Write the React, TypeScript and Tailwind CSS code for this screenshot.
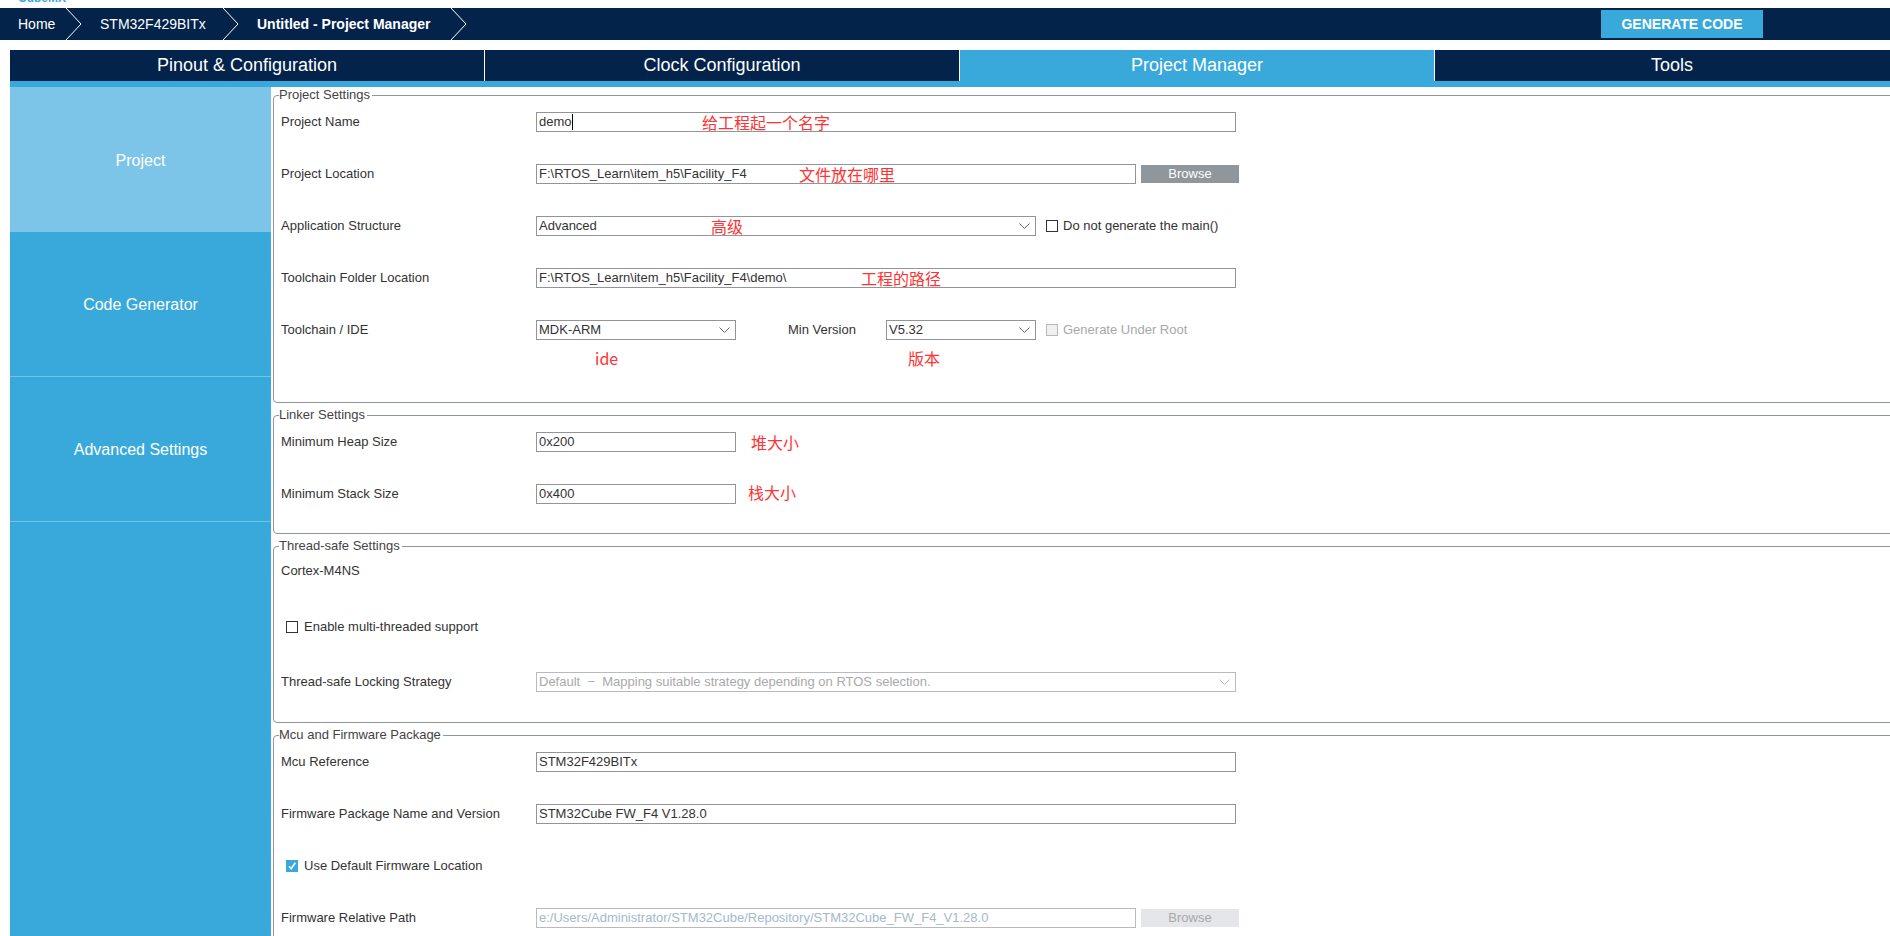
import React from "react";

function Chevron() {
  return (
    <svg width="17" height="32" viewBox="0 0 17 32" className="shrink-0">
      <polyline points="1,0 16,16 1,32" fill="none" stroke="#ffffff" strokeWidth="1" />
    </svg>
  );
}

function SelChevron({ color }: { color: string }) {
  return (
    <svg width="11" height="7" viewBox="0 0 11 7" className="shrink-0">
      <polyline points="0.5,0.5 5.5,5.5 10.5,0.5" fill="none" stroke={color} strokeWidth="1" />
    </svg>
  );
}

function Box({ checked, disabled }: { checked?: boolean; disabled?: boolean }) {
  if (checked) {
    return (
      <span className="w-[12px] h-[12px] bg-[#39a9dc] flex items-center justify-center shrink-0">
        <svg width="10" height="10" viewBox="0 0 10 10">
          <polyline points="2,5.2 4.2,7.8 8.3,1.8" fill="none" stroke="#ffffff" strokeWidth="1.6" />
        </svg>
      </span>
    );
  }
  return (
    <span
      className={
        disabled
          ? "w-[12px] h-[12px] border border-[#b8b8b8] bg-[#f0f0f0] shrink-0"
          : "w-[12px] h-[12px] border border-[#333333] bg-white shrink-0"
      }
    />
  );
}

function Field({
  className,
  children,
  disabled,
}: {
  className: string;
  children?: React.ReactNode;
  disabled?: boolean;
}) {
  return (
    <div
      className={
        (disabled
          ? "border-[#b6bbc0] text-[#a6b8cc] "
          : "border-[#8f959b] text-[#333333] ") +
        "relative flex items-center h-[20px] border bg-white pl-[2px] text-[13px] shrink-0 whitespace-nowrap " +
        className
      }
    >
      {children}
    </div>
  );
}

function Note({ className, children }: { className: string; children: React.ReactNode }) {
  return (
    <span
      className={
        "absolute top-1/2 -translate-y-1/2 text-[16px] leading-[20px] text-[#ff3333] whitespace-nowrap font-['Noto_Sans_CJK_SC',sans-serif] " +
        className
      }
    >
      {children}
    </span>
  );
}

function Label({ children }: { children: React.ReactNode }) {
  return <div className="w-[255px] shrink-0 text-[13px] text-[#333333]">{children}</div>;
}

function Legend({ children }: { children: React.ReactNode }) {
  return <legend className="text-[13px] leading-[16px] text-[#444444] pr-[2px]">{children}</legend>;
}

const tabs = [
  { name: "Pinout & Configuration", active: false },
  { name: "Clock Configuration", active: false },
  { name: "Project Manager", active: true },
  { name: "Tools", active: false },
];

const side = [
  { name: "Project", active: true },
  { name: "Code Generator", active: false },
  { name: "Advanced Settings", active: false },
];

export default function App() {
  return (
    <div className="w-[1890px] h-[936px] overflow-hidden bg-white flex flex-col font-['Liberation_Sans','Noto_Sans_CJK_SC',sans-serif]">
      <div className="h-[8px] overflow-hidden pl-[18px] shrink-0">
        <div className="text-[12px] font-bold text-[#39a9dc] leading-[12px] -mt-[8px]">CubeMX</div>
      </div>

      <div className="h-[32px] bg-[#03234b] flex items-center text-white text-[14px] shrink-0">
        <div className="w-[65px] pl-[18px]">Home</div>
        <Chevron />
        <div className="w-[140px] pl-[18px]">STM32F429BITx</div>
        <Chevron />
        <div className="w-[211px] pl-[18px] font-bold">Untitled - Project Manager</div>
        <Chevron />
        <div className="flex-1" />
        <div className="h-[28px] w-[162px] bg-[#39a9dc] text-white font-bold text-[14px] mr-[127px] flex items-center justify-center">
          GENERATE CODE
        </div>
      </div>

      <div className="mt-[10px] ml-[10px] flex gap-px h-[31px] shrink-0">
        {tabs.map((t) => (
          <div
            key={t.name}
            className={
              (t.active ? "bg-[#39a9dc] " : "bg-[#03234b] ") +
              "w-[474px] shrink-0 flex items-center justify-center text-white text-[18px]"
            }
          >
            {t.name}
          </div>
        ))}
      </div>
      <div className="ml-[10px] h-[6px] bg-[#39a9dc] shrink-0" />

      <div className="flex-1 min-h-0 flex ml-[10px] overflow-hidden">
        <div className="w-[261px] shrink-0 bg-[#39a9dc] flex flex-col">
          {side.map((s) => (
            <div
              key={s.name}
              className={
                (s.active ? "bg-[#7cc5e8] h-[145px] " : "bg-[#39a9dc] h-[145px] border-b border-[#72c1e9] ") +
                "flex items-center justify-center pt-[2px] text-white text-[16px]"
              }
            >
              {s.name}
            </div>
          ))}
        </div>

        <div className="ml-[2px] w-[1640px] shrink-0 flex flex-col gap-[4px]">
          {/* Project Settings */}
          <fieldset className="border border-[#8f959b] rounded-[4px] pl-[5px]">
            <Legend>Project Settings</Legend>
            <div className="flex flex-col gap-[14px] pl-[2px]">
              <div className="flex items-center h-[38px]">
                <Label>Project Name</Label>
                <Field className="w-[700px]">
                  <span>demo</span>
                  <span className="w-px h-[16px] bg-black" />
                  <Note className="left-[165px]">给工程起一个名字</Note>
                </Field>
              </div>
              <div className="flex items-center h-[38px]">
                <Label>Project Location</Label>
                <Field className="w-[600px]">
                  <span>F:\RTOS_Learn\item_h5\Facility_F4</span>
                  <Note className="left-[262px]">文件放在哪里</Note>
                </Field>
                <div className="ml-[5px] w-[98px] h-[18px] bg-[#8f969c] text-white text-[13px] flex items-center justify-center">
                  Browse
                </div>
              </div>
              <div className="flex items-center h-[38px]">
                <Label>Application Structure</Label>
                <Field className="w-[500px] justify-between pr-[5px]">
                  <span>Advanced</span>
                  <SelChevron color="#666666" />
                  <Note className="left-[174px]">高级</Note>
                </Field>
                <div className="ml-[10px] flex items-center gap-[5px] text-[13px] text-[#333333]">
                  <Box />
                  <span>Do not generate the main()</span>
                </div>
              </div>
              <div className="flex items-center h-[38px]">
                <Label>Toolchain Folder Location</Label>
                <Field className="w-[700px]">
                  <span>F:\RTOS_Learn\item_h5\Facility_F4\demo\</span>
                  <Note className="left-[324px]">工程的路径</Note>
                </Field>
              </div>
              <div>
                <div className="flex items-center h-[38px]">
                  <Label>Toolchain / IDE</Label>
                  <Field className="w-[200px] justify-between pr-[5px]">
                    <span>MDK-ARM</span>
                    <SelChevron color="#666666" />
                  </Field>
                  <div className="ml-[52px] w-[98px] text-[13px] text-[#333333]">Min Version</div>
                  <Field className="w-[150px] justify-between pr-[5px]">
                    <span>V5.32</span>
                    <SelChevron color="#666666" />
                  </Field>
                  <div className="ml-[10px] flex items-center gap-[5px] text-[13px] text-[#a8a8a8]">
                    <Box disabled />
                    <span>Generate Under Root</span>
                  </div>
                </div>
                <div className="flex items-center h-[20px] -mt-px text-[16px] text-[#ff3333] font-['Noto_Sans_CJK_SC',sans-serif]">
                  <span className="ml-[314px] w-[313px]">ide</span>
                  <span>版本</span>
                </div>
              </div>
            </div>
            <div className="h-[34px]" />
          </fieldset>

          {/* Linker Settings */}
          <fieldset className="border border-[#8f959b] rounded-[4px] pl-[5px]">
            <Legend>Linker Settings</Legend>
            <div className="flex flex-col gap-[14px] pl-[2px]">
              <div className="flex items-center h-[38px]">
                <Label>Minimum Heap Size</Label>
                <Field className="w-[200px]">
                  <span>0x200</span>
                </Field>
                <span className="ml-[15px] text-[16px] text-[#ff3333] font-['Noto_Sans_CJK_SC',sans-serif]">堆大小</span>
              </div>
              <div className="flex items-center h-[38px]">
                <Label>Minimum Stack Size</Label>
                <Field className="w-[200px]">
                  <span>0x400</span>
                </Field>
                <span className="ml-[12px] mb-[5px] text-[16px] text-[#ff3333] font-['Noto_Sans_CJK_SC',sans-serif]">栈大小</span>
              </div>
            </div>
            <div className="h-[20px]" />
          </fieldset>

          {/* Thread-safe Settings */}
          <fieldset className="border border-[#8f959b] rounded-[4px] pl-[5px]">
            <Legend>Thread-safe Settings</Legend>
            <div className="flex flex-col pl-[2px]">
              <div className="flex items-center h-[34px] text-[13px] text-[#333333]">Cortex-M4NS</div>
              <div className="mt-[20px] flex items-center h-[38px] text-[13px] text-[#333333]">
                <span className="ml-[5px]" />
                <Box />
                <span className="ml-[6px]">Enable multi-threaded support</span>
              </div>
              <div className="mt-[17px] flex items-center h-[38px]">
                <Label>Thread-safe Locking Strategy</Label>
                <div className="w-[700px] h-[20px] border border-[#b6bbc0] bg-white pl-[2px] pr-[5px] flex items-center justify-between text-[13px] text-[#a9a9a9] whitespace-pre">
                  <span>Default  −  Mapping suitable strategy depending on RTOS selection.</span>
                  <SelChevron color="#bdbdbd" />
                </div>
              </div>
            </div>
            <div className="h-[21px]" />
          </fieldset>

          {/* Mcu and Firmware Package */}
          <fieldset className="border border-[#8f959b] rounded-[4px] pl-[5px]">
            <Legend>Mcu and Firmware Package</Legend>
            <div className="flex flex-col gap-[14px] pl-[2px]">
              <div className="flex items-center h-[38px]">
                <Label>Mcu Reference</Label>
                <Field className="w-[700px]">
                  <span>STM32F429BITx</span>
                </Field>
              </div>
              <div className="flex items-center h-[38px]">
                <Label>Firmware Package Name and Version</Label>
                <Field className="w-[700px]">
                  <span>STM32Cube FW_F4 V1.28.0</span>
                </Field>
              </div>
              <div className="flex items-center h-[38px] text-[13px] text-[#333333]">
                <span className="ml-[5px]" />
                <Box checked />
                <span className="ml-[6px]">Use Default Firmware Location</span>
              </div>
              <div className="flex items-center h-[38px]">
                <Label>Firmware Relative Path</Label>
                <Field className="w-[600px]" disabled>
                  <span>e:/Users/Administrator/STM32Cube/Repository/STM32Cube_FW_F4_V1.28.0</span>
                </Field>
                <div className="ml-[5px] w-[98px] h-[18px] bg-[#e4e6e9] text-[#a8a8a8] text-[13px] flex items-center justify-center">
                  Browse
                </div>
              </div>
            </div>
            <div className="h-[40px]" />
          </fieldset>
        </div>
      </div>
    </div>
  );
}
